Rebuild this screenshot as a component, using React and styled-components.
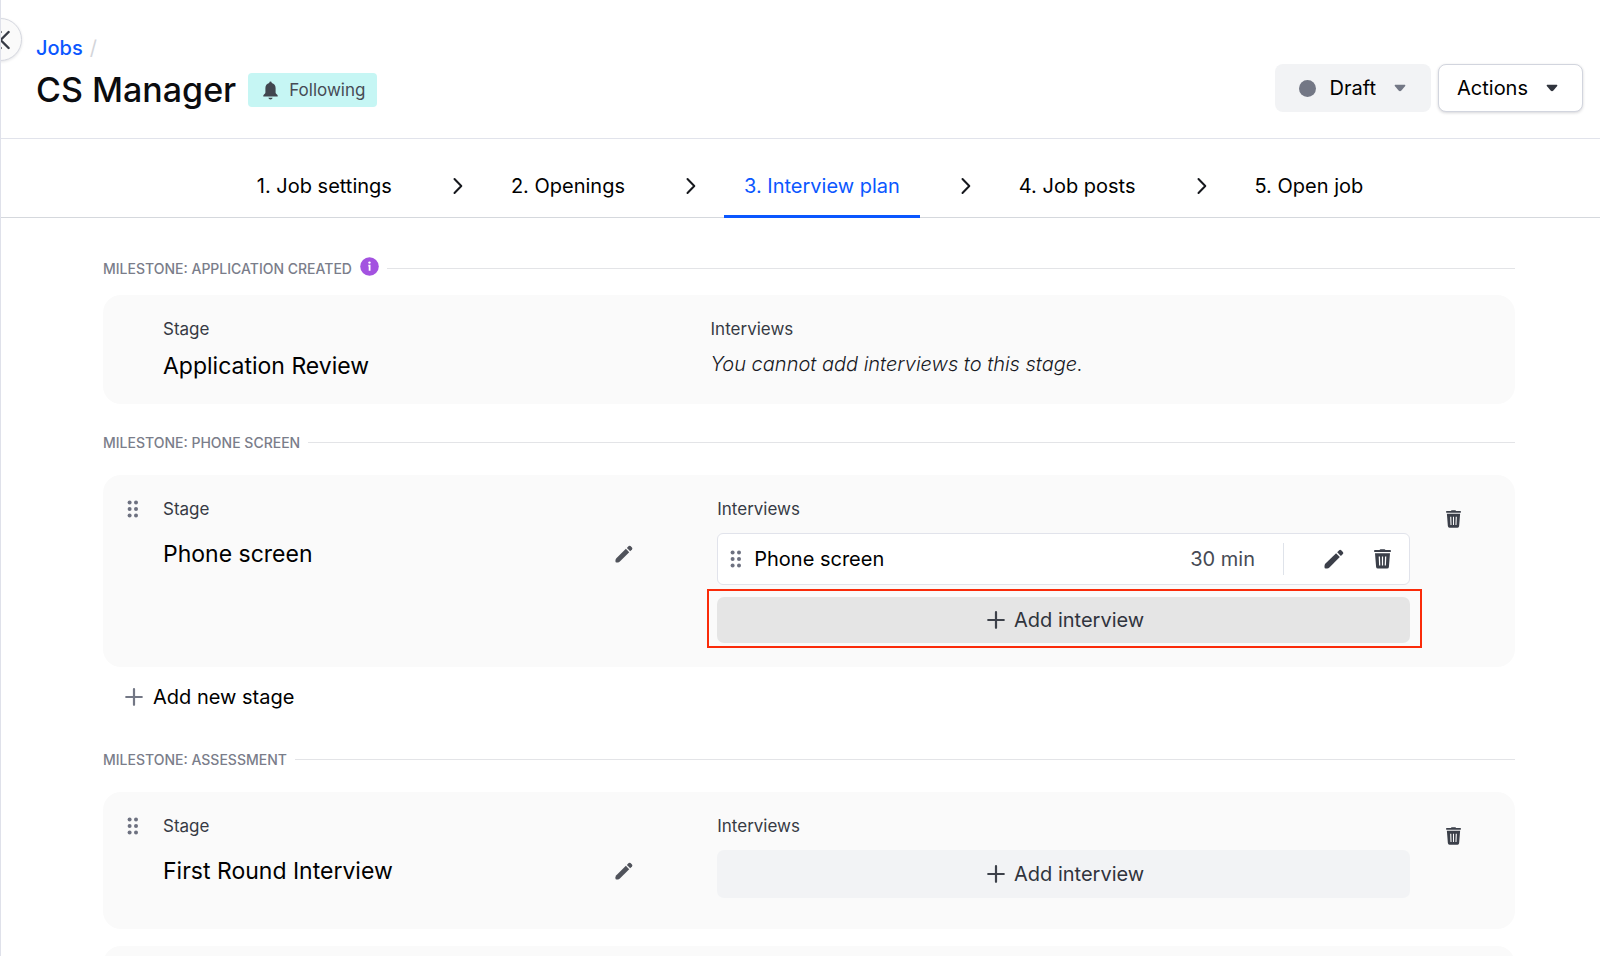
import React from "react";
import styled, { createGlobalStyle, css } from "styled-components";

const GlobalStyle = createGlobalStyle`
  *, *::before, *::after { box-sizing: border-box; }
  body { margin: 0; background: #fff; }
  body, button, select {
    font-family: Inter, "Liberation Sans", sans-serif;
    font-size: 20px;
    line-height: 28px;
    color: #000;
  }
  button, select { border: 0; background: none; padding: 0; margin: 0; cursor: pointer; }
  h1, h2, h3, p, ol, ul { margin: 0; padding: 0; font-weight: 400; }
  ol, ul { list-style: none; }
  svg { display: block; flex: none; }
`;

const Shell = styled.div`
  position: relative;
  height: 100vh;
  overflow: hidden;
  border-left: 1px solid #dfe1ea;
`;

const CollapseButton = styled.button`
  position: absolute;
  top: 18px;
  left: -22px;
  width: 43px;
  height: 43px;
  border: 1px solid #d6d8e0;
  border-radius: 50%;
  background: #fafafa;
  box-shadow: 0 1px 3px rgba(20, 24, 40, 0.12);
  display: flex;
  align-items: center;
  justify-content: flex-end;
  padding-right: 11px;
`;

const Header = styled.header`
  display: flex;
  align-items: flex-end;
  justify-content: space-between;
  padding: 34px 17px 20px 35px;
  border-bottom: 1px solid #e1e3eb;
`;

const Breadcrumb = styled.nav`
  display: flex;
  gap: 7px;
  color: #d3d5da;
`;

const CrumbLink = styled.a`
  color: #0b57ff;
  font-weight: 500;
  text-decoration: none;
`;

const TitleRow = styled.div`
  display: flex;
  align-items: center;
  gap: 12px;
  height: 56px;
`;

const Title = styled.h1`
  font-size: 34px;
  line-height: 48px;
  font-weight: 500;
  color: #0b0c0f;
`;

const FollowButton = styled.button`
  display: flex;
  align-items: center;
  gap: 11px;
  height: 34px;
  padding: 0 12px 0 15px;
  border-radius: 4px;
  background: #c6f6f4;
  color: #474b54;
  font-size: 17px;
`;

const HeaderActions = styled.div`
  display: flex;
  gap: 7px;
  padding-bottom: 6px;
`;

const controlBox = css`
  display: flex;
  align-items: center;
  height: 48px;
  border-radius: 8px;
  font-weight: 400;
`;

const StatusField = styled.label`
  ${controlBox}
  padding: 0 25px 0 24px;
  background: #f2f3f5;
`;

const StatusDot = styled.span`
  width: 17px;
  height: 17px;
  margin-right: 14px;
  border-radius: 50%;
  background: #737785;
`;

const StatusSelect = styled.select`
  appearance: none;
  field-sizing: content;
  font-weight: 400;
  margin-right: 18px;
  outline: none;
`;

const ActionsButton = styled.button`
  ${controlBox}
  gap: 18px;
  padding: 0 24px 0 18px;
  border: 1px solid #d2d5de;
  background: #fff;
  box-shadow: 0 1px 3px rgba(20, 24, 40, 0.18);
`;

const Steps = styled.ol`
  display: flex;
  justify-content: center;
  height: 79px;
  padding: 18px 84px 0 103px;
  border-bottom: 1px solid #d5d8dd;
`;

const Step = styled.li`
  display: flex;
  align-items: stretch;
`;

const StepLink = styled.a`
  display: flex;
  align-items: center;
  padding: 0 20px;
  margin-bottom: -1px;
  border-bottom: 3px solid ${(p) => (p.$active ? "#0b57ff" : "transparent")};
  color: ${(p) => (p.$active ? "#0b57ff" : "#000")};
  text-decoration: none;
  white-space: nowrap;
`;

const StepGap = styled.span`
  display: flex;
  align-items: center;
  justify-content: center;
  width: 79px;
  padding: 0 0 2px 14px;
`;

const Plan = styled.main`
  padding: 40px 85px 0 102px;
`;

const MilestoneHeading = styled.div`
  display: flex;
  align-items: center;
  gap: 8px;
  height: 20px;
  margin-bottom: ${(p) => p.$space}px;

  &::after {
    content: "";
    flex: 1;
    height: 1px;
    background: #e3e4e7;
  }
`;

const MilestoneName = styled.h2`
  padding-top: 1px;
  font-size: 14px;
  line-height: 20px;
  font-weight: 500;
  color: #7a7d8a;
  text-transform: uppercase;
`;

const InfoButton = styled.button`
  margin-bottom: 4px;
`;

const Card = styled.section`
  display: grid;
  grid-template-columns: 60px minmax(0, 4fr) minmax(0, 5fr) ${(p) => (p.$locked ? 120 : 105)}px;
  min-height: ${(p) => (p.$locked ? 109 : 137)}px;
  margin-bottom: ${(p) => p.$space}px;
  padding: 22px 0 23px;
  border-radius: 18px;
  background: #fafafa;
`;

const HandleSlot = styled.div`
  padding: 3px 0 0 24px;
`;

const DragHandle = styled.button`
  display: block;
  cursor: grab;
`;

const FieldLabel = styled.h3`
  font-size: 17px;
  line-height: 24px;
  color: #363a44;
`;

const StageName = styled.p`
  font-size: 23px;
  line-height: 30px;
`;

const StageRow = styled.div`
  display: flex;
  align-items: center;
  justify-content: space-between;
  padding: ${(p) => (p.$locked ? "10px 0 0" : "18px 84px 0 0")};
`;

const LockedNote = styled.p`
  padding-top: 9px;
  font-style: italic;
  font-weight: 300;
  color: #16181e;
`;

const IconButton = styled.button`
  display: flex;
  color: ${(p) => p.$color || "#3b3f49"};
`;

const InterviewList = styled.ul`
  padding-top: 12px;
`;

const InterviewItem = styled.li`
  display: flex;
  align-items: center;
  height: 52px;
  padding: 0 18px 0 12px;
  border: 1px solid #e1e3eb;
  border-radius: 6px;
  background: #fff;
`;

const InterviewName = styled.span`
  flex: 1;
  padding-left: 12px;
`;

const Duration = styled.span`
  margin-right: 28px;
  color: #464a54;
`;

const ItemActions = styled.div`
  display: flex;
  align-items: center;
  gap: 30px;
  height: 32px;
  padding-left: 40px;
  border-left: 1px solid #dfe3ea;
`;

const AddInterviewButton = styled.button`
  display: flex;
  align-items: center;
  justify-content: center;
  gap: 9px;
  width: 100%;
  height: ${(p) => (p.$hovered ? 46 : 48)}px;
  padding-left: 4px;
  border-radius: 7px;
  background: ${(p) => (p.$hovered ? "#e5e5e5" : "#f2f3f5")};
  color: #30343d;
`;

const Highlight = styled.div`
  margin: 4px -12px -4px -10px;
  padding: 6px 10px 3px 8px;
  border: 2px solid #fa2b09;
`;

const AddSlot = styled.div`
  padding-top: 12px;
`;

const TrashSlot = styled.div`
  padding: 13px 0 0 36px;
`;

const AddStageButton = styled.button`
  display: flex;
  align-items: center;
  gap: 10px;
  margin: 0 0 38px 22px;
`;

function PlusIcon({ color = "#3d414a" }) {
  return (
    <svg width="18" height="18" viewBox="0 0 18 18" fill="none" stroke={color} strokeWidth="2.2" strokeLinecap="round" aria-hidden="true">
      <path d="M9 1.2v15.6M1.2 9h15.6" />
    </svg>
  );
}

function DotsIcon() {
  return (
    <svg width="12" height="18" viewBox="0 0 12 18" fill="#6d7180" aria-hidden="true">
      {[2.6, 9, 15.4].map((y) => (
        <React.Fragment key={y}>
          <circle cx="2.6" cy={y} r="2" />
          <circle cx="9" cy={y} r="2" />
        </React.Fragment>
      ))}
    </svg>
  );
}

function PencilIcon({ size = 20 }) {
  return (
    <svg width={size} height={size} viewBox="0 0 20 20" fill="currentColor" aria-hidden="true">
      <path d="M12.1 4.3 15.8 8 5.4 18.4q-1 1-2.3 1.1H1.7q-1.2 0-1.2-1.2v-1.4q.1-1.3 1-2.3Z" />
      <path d="m13.2 3.2 2-2q1-.9 2 0l1.7 1.7q.9 1 0 2l-2 2Z" />
    </svg>
  );
}

function TrashIcon({ width = 17, height = 20 }) {
  return (
    <svg width={width} height={height} viewBox="0 0 17 20" preserveAspectRatio="none" fill="currentColor" aria-hidden="true">
      <path d="M5.6 1.1Q5.8.3 6.6.3h3.8q.8 0 1 .8h4.9q.6 0 .6.6v.9q0 .4-.4.4H.5q-.4 0-.4-.4v-.9q0-.6.6-.6Z" />
      <path
        fillRule="evenodd"
        d="M1 4.3h15l-1.1 13.6q-.2 1.7-1.8 1.7H3.9q-1.6 0-1.8-1.7ZM4.7 7.4l.4 9.2h1.2l-.3-9.2Zm3.2 0v9.2h1.2V7.4Zm3.1 0-.3 9.2h1.2l.4-9.2Z"
      />
    </svg>
  );
}

function CaretIcon({ color }) {
  return (
    <svg width="12" height="8" viewBox="0 0 12 8" fill={color} aria-hidden="true">
      <path d="M1.2.8h9.6q1 .3.4 1.3L7.4 6.5Q6 7.8 4.6 6.5L.8 2.1Q.2 1.1 1.2.8Z" />
    </svg>
  );
}

function ChevronIcon() {
  return (
    <svg width="10" height="18" viewBox="0 0 10 18" fill="none" stroke="#16181d" strokeWidth="2" strokeLinecap="round" strokeLinejoin="round" aria-hidden="true">
      <path d="M1.5 2 8.3 9l-6.8 7" />
    </svg>
  );
}

function CollapseIcon() {
  return (
    <svg width="20" height="20" viewBox="0 0 20 20" fill="none" stroke="#363a44" strokeWidth="2.4" strokeLinecap="round" strokeLinejoin="round" aria-hidden="true">
      <path d="m18.6 2-8 8 8 8M10.6 2l-8 8 8 8" />
    </svg>
  );
}

function BellIcon() {
  return (
    <svg width="15" height="19" viewBox="0 0 15 19" fill="#42464f" aria-hidden="true">
      <path d="M7.5.6q1.1 0 1.3 1.3c2.4.6 3.8 2.5 3.8 5.1v4.3c0 1 .4 1.6 1.6 2.5q.5.4.5 1v.6H.3v-.6q0-.6.5-1c1.2-.9 1.6-1.5 1.6-2.5V7c0-2.6 1.4-4.5 3.8-5.1Q6.4.6 7.5.6Z" />
      <path d="M5.3 16.7h4.4q-.4 1.7-2.2 1.7t-2.2-1.7Z" />
    </svg>
  );
}

function InfoIcon() {
  return (
    <svg width="19" height="19" viewBox="0 0 19 19" aria-hidden="true">
      <circle cx="9.5" cy="9.5" r="9.3" fill="#a352e0" />
      <circle cx="9.5" cy="5.6" r="1.2" fill="#fff" />
      <path d="M8.3 8.6h1.3v5.2" fill="none" stroke="#fff" strokeWidth="1.8" />
    </svg>
  );
}

const steps = ["Job settings", "Openings", "Interview plan", "Job posts", "Open job"];
const activeStep = 2;

function Milestone({ name, info, space = 23 }) {
  return (
    <MilestoneHeading $space={space}>
      <MilestoneName>Milestone: {name}</MilestoneName>
      {info && (
        <InfoButton aria-label="About this milestone">
          <InfoIcon />
        </InfoButton>
      )}
    </MilestoneHeading>
  );
}

function StageCard({ name, interviews = [], highlighted, space }) {
  const addButton = (
    <AddInterviewButton $hovered={highlighted}>
      <PlusIcon />
      Add interview
    </AddInterviewButton>
  );
  return (
    <Card $space={space}>
      <HandleSlot>
        <DragHandle aria-label={`Move ${name}`}>
          <DotsIcon />
        </DragHandle>
      </HandleSlot>
      <div>
        <FieldLabel>Stage</FieldLabel>
        <StageRow>
          <StageName>{name}</StageName>
          <IconButton aria-label={`Rename ${name}`} $color="#50535b">
            <PencilIcon size={18} />
          </IconButton>
        </StageRow>
      </div>
      <div>
        <FieldLabel>Interviews</FieldLabel>
        {interviews.length > 0 && (
          <InterviewList>
            {interviews.map((item) => (
              <InterviewItem key={item.name}>
                <DragHandle aria-label={`Move interview ${item.name}`}>
                  <DotsIcon />
                </DragHandle>
                <InterviewName>{item.name}</InterviewName>
                <Duration>{item.duration}</Duration>
                <ItemActions>
                  <IconButton aria-label={`Edit interview ${item.name}`}>
                    <PencilIcon />
                  </IconButton>
                  <IconButton aria-label={`Delete interview ${item.name}`}>
                    <TrashIcon />
                  </IconButton>
                </ItemActions>
              </InterviewItem>
            ))}
          </InterviewList>
        )}
        {highlighted ? <Highlight>{addButton}</Highlight> : <AddSlot>{addButton}</AddSlot>}
      </div>
      <TrashSlot>
        <IconButton aria-label={`Delete ${name}`}>
          <TrashIcon width={15} height={18} />
        </IconButton>
      </TrashSlot>
    </Card>
  );
}

export default function App() {
  return (
    <>
      <GlobalStyle />
      <Shell>
        <Header>
          <div>
            <Breadcrumb aria-label="Breadcrumb">
              <CrumbLink href="#jobs">Jobs</CrumbLink>
              <span>/</span>
            </Breadcrumb>
            <TitleRow>
              <Title>CS Manager</Title>
              <FollowButton>
                <BellIcon />
                Following
              </FollowButton>
            </TitleRow>
          </div>
          <HeaderActions>
            <StatusField>
              <StatusDot />
              <StatusSelect aria-label="Job status" defaultValue="Draft">
                <option>Draft</option>
              </StatusSelect>
              <CaretIcon color="#737785" />
            </StatusField>
            <ActionsButton>
              Actions
              <CaretIcon color="#30343d" />
            </ActionsButton>
          </HeaderActions>
        </Header>

        <Steps>
          {steps.map((label, i) => (
            <Step key={label}>
              {i > 0 && (
                <StepGap>
                  <ChevronIcon />
                </StepGap>
              )}
              <StepLink href={`#step-${i + 1}`} $active={i === activeStep}>
                {i + 1}. {label}
              </StepLink>
            </Step>
          ))}
        </Steps>

        <Plan>
          <Milestone name="Application created" info space={17} />
          <Card $locked $space={28}>
            <div />
            <div>
              <FieldLabel>Stage</FieldLabel>
              <StageRow $locked>
                <StageName>Application Review</StageName>
              </StageRow>
            </div>
            <div>
              <FieldLabel>Interviews</FieldLabel>
              <LockedNote>You cannot add interviews to this stage.</LockedNote>
            </div>
          </Card>

          <Milestone name="Phone screen" />
          <StageCard
            name="Phone screen"
            interviews={[{ name: "Phone screen", duration: "30 min" }]}
            highlighted
            space={16}
          />
          <AddStageButton>
            <PlusIcon color="#737785" />
            Add new stage
          </AddStageButton>

          <Milestone name="Assessment" />
          <StageCard name="First Round Interview" space={17} />
          <Card />
        </Plan>
        <CollapseButton aria-label="Collapse sidebar">
          <CollapseIcon />
        </CollapseButton>
      </Shell>
    </>
  );
}
